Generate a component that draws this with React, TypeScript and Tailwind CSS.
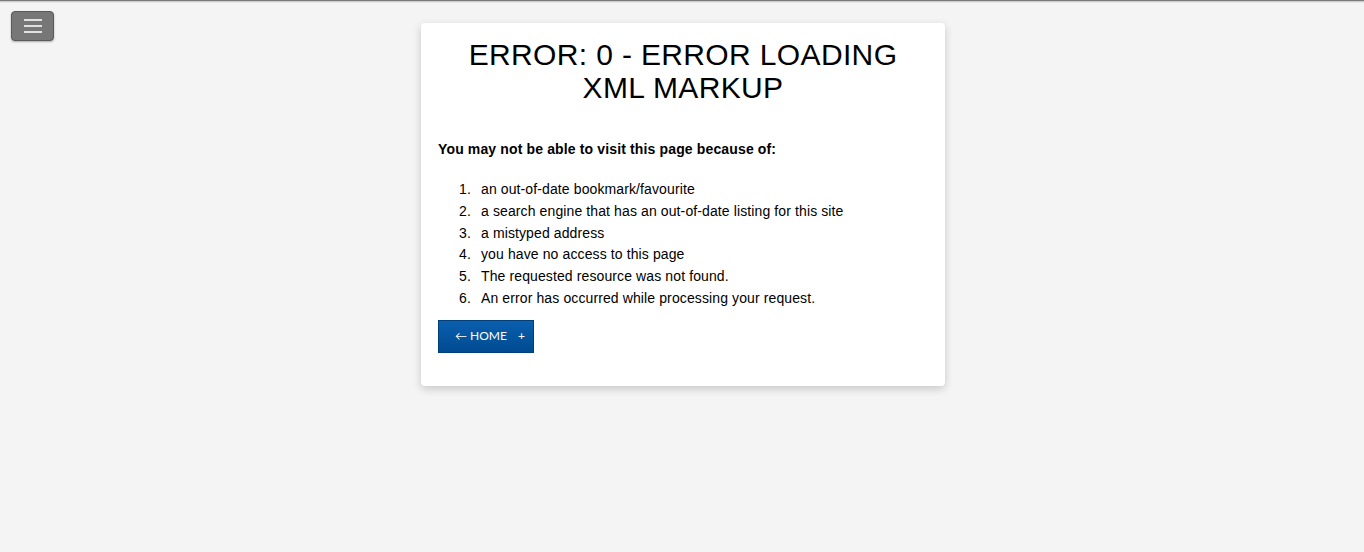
import React from "react";

const reasons = [
  "an out-of-date bookmark/favourite",
  "a search engine that has an out-of-date listing for this site",
  "a mistyped address",
  "you have no access to this page",
  "The requested resource was not found.",
  "An error has occurred while processing your request.",
];

const App = () => {
  return (
    <div className="min-h-[552px] bg-[#f4f4f4] font-['Liberation_Sans',Arial,sans-serif] text-black relative">
      {/* top shadow line */}
      <div className="h-[3px] bg-gradient-to-b from-[#555] via-[#ccc] to-[#f4f4f4]" />

      {/* menu toggle */}
      <button className="absolute left-[11px] top-[11px] w-[43px] h-[30px] rounded-[4px] bg-[#777] border border-[#5a5a5a] shadow-[0_1px_2px_rgba(0,0,0,0.3)] flex flex-col items-center justify-center gap-[4px]">
        <span className="block w-[18px] h-[2px] bg-[#e0e0e0]" />
        <span className="block w-[18px] h-[2px] bg-[#e0e0e0]" />
        <span className="block w-[18px] h-[2px] bg-[#e0e0e0]" />
      </button>

      <div className="flex justify-center pt-[20px] pl-[2px]">
        <div className="w-[524px] bg-white rounded-[4px] shadow-[0_3px_8px_rgba(0,0,0,0.18)] px-[17px] pt-[15px] pb-[33px]">
          <h1 className="text-center text-[30px] leading-[33px] tracking-[0.012em] px-4">
            ERROR: 0 - ERROR LOADING XML MARKUP
          </h1>

          <p className="mt-[37px] text-[14px] leading-[16px] font-bold tracking-[0.01em]">
            You may not be able to visit this page because of:
          </p>

          <ol className="mt-[22px] text-[14px] leading-[21.8px] tracking-[0.008em]">
            {reasons.map((r, i) => (
              <li key={r} className="flex">
                <span className="w-[43px] shrink-0 text-right pr-[10px]">{i + 1}.</span>
                <span>{r}</span>
              </li>
            ))}
          </ol>

          <button className="mt-[10px] w-[96px] h-[33px] bg-gradient-to-b from-[#0b5fae] to-[#004b91] border border-[#003f7a] text-white text-[12px] font-['Lato',sans-serif] flex items-center pl-[16px]">
            <span>&larr; HOME</span>
            <span className="ml-[11px]">+</span>
          </button>
        </div>
      </div>
    </div>
  );
};

export default App;
